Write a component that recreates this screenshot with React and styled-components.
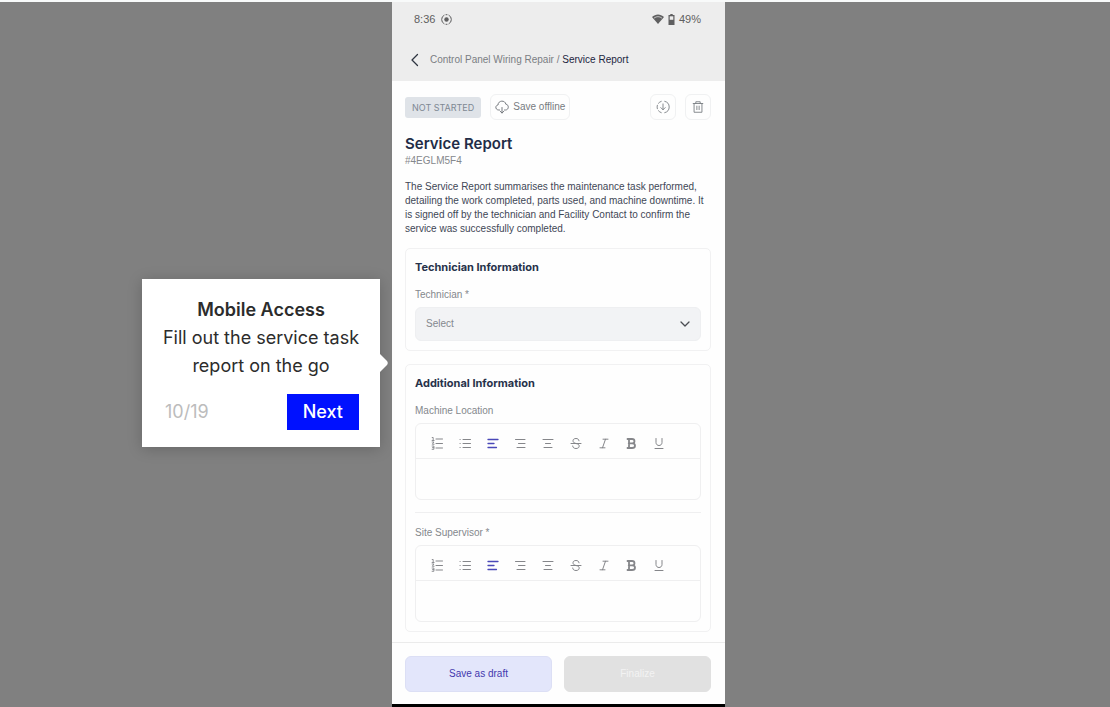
import React from "react";
import styled, { createGlobalStyle } from "styled-components";

const GlobalStyle = createGlobalStyle`
  *, *::before, *::after { box-sizing: border-box; }
  body { margin: 0; background: #808080; font-family: Inter, "Liberation Sans", sans-serif; }
  h1, h2, p { margin: 0; }
  button, select, textarea { font: inherit; margin: 0; }
`;

const Stage = styled.main`
  display: flex;
  justify-content: center;
  min-height: 100vh;
  padding-left: 7px;
  border-top: 2px solid #f8fafa;
`;

const Phone = styled.div`
  display: flex;
  flex-direction: column;
  flex: 0 1 333px;
  min-width: 0;
  background: #fefefe;
  border-bottom: 3px solid #000;
  color: #3f4756;
  font-family: "Liberation Sans", Arial, sans-serif;
  font-size: 10px;
  line-height: 14px;
`;

const TopArea = styled.header`
  background: #ededed;
  padding: 9px 22px 14px 18px;
`;

const StatusBar = styled.div`
  display: flex;
  justify-content: space-between;
  align-items: center;
  padding: 0 2px 0 4px;
  color: #5f5f60;
  font-size: 11px;
  line-height: 16px;
`;

const StatusGroup = styled.div`
  display: flex;
  align-items: center;
  gap: ${(p) => p.$gap}px;
`;

const Crumbs = styled.nav`
  display: flex;
  align-items: center;
  gap: 10px;
  margin-top: 26px;
  line-height: 14px;
  color: #7b7e83;
  white-space: nowrap;
`;

const BackButton = styled.button`
  display: flex;
  padding: 0;
  border: 0;
  background: none;
  color: #2e3440;
`;

const CrumbLink = styled.a`
  color: inherit;
  text-decoration: none;
`;

const CurrentCrumb = styled.span`
  color: #1c2540;
`;

const Content = styled.div`
  display: flex;
  flex-direction: column;
  flex: 1;
  padding: 13px 14px 9px 13px;
`;

const ActionRow = styled.div`
  display: flex;
  align-items: center;
  gap: 9px;
`;

const StatusTag = styled.span`
  padding: 4px 7px;
  border-radius: 3px;
  background: #dfe3e8;
  color: #7e8893;
  font-family: Inter, sans-serif;
  font-size: 9px;
  line-height: 13px;
  white-space: nowrap;
`;

const OutlineButton = styled.button`
  display: flex;
  align-items: center;
  justify-content: center;
  gap: 4px;
  height: 26px;
  min-width: 26px;
  padding: 0 4px;
  border: 1px solid #f0f1f2;
  border-radius: 6px;
  background: #fefefe;
  color: #777b80;
  white-space: nowrap;
`;

const Spacer = styled.span`
  flex: 1;
`;

const Title = styled.h1`
  margin-top: 14px;
  color: #222c47;
  font-family: Inter, sans-serif;
  font-size: 15px;
  font-weight: 600;
  line-height: 20px;
`;

const ReportId = styled.p`
  color: #85888c;
  line-height: 14px;
`;

const Description = styled.p`
  margin: 12px 0;
  line-height: 14px;
  white-space: nowrap;
`;

const Card = styled.section`
  padding: 9px;
  border: 1px solid #f1f1f2;
  border-radius: 5px;

  & + & { margin-top: 13px; }
`;

const CardTitle = styled.h2`
  margin-bottom: 12px;
  color: #27324a;
  font-family: Inter, sans-serif;
  font-size: 11px;
  font-weight: 700;
  line-height: 18px;
`;

const Label = styled.label`
  display: block;
  margin-bottom: 5px;
  color: #84888d;
  line-height: 14px;
`;

const SelectWrap = styled.div`
  display: grid;
  align-items: center;

  & > * { grid-area: 1 / 1; }
  & > svg { justify-self: end; margin-right: 11px; pointer-events: none; color: #4a4d52; }
`;

const Select = styled.select`
  appearance: none;
  width: 100%;
  height: 34px;
  padding: 0 10px;
  border: 1px solid #eeeff1;
  border-radius: 6px;
  background: #f2f3f5;
  color: #84888e;
`;

const Editor = styled.div`
  overflow: hidden;
  border: 1px solid #efeff0;
  border-radius: 6px;
`;

const Toolbar = styled.div`
  display: flex;
  justify-content: space-between;
  padding: 11px 33px 7px 13px;
  border-bottom: 1px solid #efeff0;
`;

const ToolButton = styled.button`
  display: flex;
  padding: 0;
  border: 0;
  background: none;
  color: ${(p) => (p.$active ? "#4a48b8" : "#85868a")};
`;

const EditorInput = styled.textarea`
  display: block;
  width: 100%;
  height: 40px;
  padding: 8px;
  border: 0;
  outline: 0;
  resize: none;
  background: transparent;
`;

const Divider = styled.hr`
  height: 1px;
  margin: 12px 0 13px;
  border: 0;
  background: #efeff0;
`;

const Footer = styled.footer`
  display: flex;
  gap: 12px;
  padding: 13px 14px 12px 13px;
  border-top: 1px solid #ebebeb;
`;

const FooterButton = styled.button`
  flex: 1;
  height: 36px;
  border: 1px solid ${(p) => (p.$primary ? "#dcdff5" : "#e1e1e1")};
  border-radius: 6px;
  background: ${(p) => (p.$primary ? "#e3e6fb" : "#e1e1e1")};
  color: ${(p) => (p.$primary ? "#4338ae" : "#f3f3f3")};
`;

const Tour = styled.aside`
  position: absolute;
  top: 279px;
  right: calc(50% + 175px);
  width: 238px;
  padding: 17px 16px;
  background: #fff;
  box-shadow: 0 2px 14px rgba(0, 0, 0, 0.2);
  color: #2c2c2c;
  font-size: 18px;
  line-height: 28px;
  text-align: center;
`;

const TourTitle = styled.h2`
  font-size: 18px;
  font-weight: 600;
  line-height: 28px;
`;

const TourFooter = styled.div`
  display: flex;
  justify-content: space-between;
  align-items: center;
  margin-top: 14px;
  padding: 0 5px;
`;

const TourCount = styled.span`
  padding-left: 2px;
  color: #bcbcbc;
`;

const NextButton = styled.button`
  height: 36px;
  padding: 0 16px;
  border: 0;
  background: #0011ff;
  color: #fff;
  font-weight: 500;
`;

const TourArrow = styled.svg`
  position: absolute;
  left: 100%;
  top: 50%;
  margin-top: -9px;
`;

const Stroke = ({ size = 16, width = 1, children }) => (
  <svg width={size} height={size} viewBox="0 0 16 16" fill="none" stroke="currentColor"
    strokeWidth={width} strokeLinecap="round" strokeLinejoin="round" aria-hidden="true">
    {children}
  </svg>
);

const tools = [
  { name: "Numbered list", art: <><path d="M7 4H13.500M7 8.500H13.500M7 13H13.500" /><path d="M3.200 2.500h1v3M3.100 5.500h2M3.100 7h1.800l-1.600 2.300h1.800M3.100 11h1.800v3.300H3.100M3.500 12.600h1.300" strokeWidth=".9" /></> },
  { name: "Bulleted list", art: <path d="M6 4.500h7.500M6 8.500h7.500M6 12.500h7.500M3 4.500h.2M3 8.500h.2M3 12.500h.2" /> },
  { name: "Align left", active: true, art: <path d="M3 4.500h10M3 8.500h6M3 12.500h8.500" strokeWidth="1.3" /> },
  { name: "Align right", art: <path d="M3.500 4.500h9.500M6.500 8.500H13M5 12.500h8" /> },
  { name: "Align center", art: <path d="M3 4.500h10M5.500 8.500h5M4 12.500h8" /> },
  { name: "Strikethrough", art: <><path d="M3 8.500h10" /><path d="M11 5.800C10.800 4.200 9.700 3.500 8 3.500c-1.800 0-3 .8-3 2.300 0 1.600 1.200 2.200 3 2.700 2.200.5 3.200 1.100 3.200 2.600s-1.300 2.400-3.200 2.400-3.200-.8-3.300-2.500" /></> },
  { name: "Italic", art: <path d="M7 4.200h5M4 12.800h5M9.500 4.200l-3 8.600" /> },
  { name: "Bold", art: <path d="M4.500 4H9c3.300 0 3.300 4.300 0 4.300H5.700M9 8.300c4 0 4 4.700 0 4.700H4.500M6 4v9" strokeWidth="1.800" /> },
  { name: "Underline", art: <path d="M5 3.500v4c0 4 6 4 6 0v-4M4 13.500h8" /> },
];

function RichField({ id, label }) {
  return (
    <div>
      <Label htmlFor={id}>{label}</Label>
      <Editor>
        <Toolbar role="toolbar" aria-label={label + " formatting"}>
          {tools.map((t) => (
            <ToolButton key={t.name} type="button" aria-label={t.name} $active={t.active}>
              <Stroke>{t.art}</Stroke>
            </ToolButton>
          ))}
        </Toolbar>
        <EditorInput id={id} />
      </Editor>
    </div>
  );
}

export default function App() {
  return (
    <>
      <GlobalStyle />
      <Stage>
        <Phone>
          <TopArea>
            <StatusBar>
              <StatusGroup $gap={6}>
                <span>8:36</span>
                <svg width="11" height="11" viewBox="0 0 11 11" fill="none" stroke="currentColor" aria-hidden="true">
                  <circle cx="5.5" cy="5.5" r="2.2" fill="currentColor" stroke="none" />
                  <path d="M3.400 1.100a4.900 4.900 0 0 0 0 8.800M7.600 1.100a4.900 4.900 0 0 1 0 8.800M4.600.7h1.800M4.600 10.300h1.800" />
                </svg>
              </StatusGroup>
              <StatusGroup $gap={4}>
                <svg width="12" height="10" viewBox="0 0 12 10" aria-hidden="true">
                  <path d="M0 3C3.500-.4 8.500-.4 12 3L6 10Z" fill="currentColor" />
                  <path d="M2 4.200C4.500 2.200 7.500 2.200 10 4.200" stroke="#ededed" strokeWidth=".7" fill="none" />
                </svg>
                <svg width="7" height="11" viewBox="0 0 7 11" aria-hidden="true">
                  <path d="M2.300 0h2.400v1H6.500v10h-6V1h1.800Z" fill="currentColor" />
                  <path d="M1.700 2.300h3.600v3.500H1.700Z" fill="#ededed" />
                </svg>
                <span>49%</span>
              </StatusGroup>
            </StatusBar>
            <Crumbs aria-label="Breadcrumb">
              <BackButton type="button" aria-label="Back">
                <svg width="10" height="14" viewBox="0 0 10 14" fill="none" stroke="currentColor" strokeWidth="1.3" strokeLinecap="round" strokeLinejoin="round" aria-hidden="true">
                  <path d="M7.500 1.500 2 7l5.500 5.500" />
                </svg>
              </BackButton>
              <span>
                <CrumbLink href="#task">Control Panel Wiring Repair</CrumbLink> / <CurrentCrumb>Service Report</CurrentCrumb>
              </span>
            </Crumbs>
          </TopArea>

          <Content>
            <ActionRow>
              <StatusTag>NOT STARTED</StatusTag>
              <OutlineButton type="button">
                <svg width="14" height="14" viewBox="0 0 14 14" fill="none" stroke="currentColor" strokeLinecap="round" strokeLinejoin="round" aria-hidden="true">
                  <path d="M4.500 10H3.800C.2 10-.2 5.500 3 5c.2-5 7.300-5 7.800-.8C14.300 4.500 14 10 10.500 10H9.500M7 7.500V13M5.200 11.300 7 13l1.800-1.700" />
                </svg>
                Save offline
              </OutlineButton>
              <Spacer />
              <OutlineButton type="button" aria-label="Download">
                <Stroke size={14}>
                  <path d="M10 1.500a6.700 6.700 0 0 1 0 13M6 14.500a6.700 6.700 0 0 1-3.200-2.200M1.500 10a6.700 6.700 0 0 1 0-4M2.800 3.700A6.700 6.700 0 0 1 6 1.500M8 4.500v6.500M5.500 8.700 8 11.200l2.500-2.500" />
                </Stroke>
              </OutlineButton>
              <OutlineButton type="button" aria-label="Delete">
                <Stroke size={14}>
                  <path d="M2.500 4h11M5.500 4V2h5v2M3.500 4v10h9V4M6.700 7v4M9.300 7v4" />
                </Stroke>
              </OutlineButton>
            </ActionRow>

            <Title>Service Report</Title>
            <ReportId>#4EGLM5F4</ReportId>
            <Description>
              The Service Report summarises the maintenance task performed,<br />
              detailing the work completed, parts used, and machine downtime. It<br />
              is signed off by the technician and Facility Contact to confirm the<br />
              service was successfully completed.
            </Description>

            <Card>
              <CardTitle>Technician Information</CardTitle>
              <Label htmlFor="technician">Technician *</Label>
              <SelectWrap>
                <Select id="technician" defaultValue="">
                  <option value="">Select</option>
                </Select>
                <svg width="10" height="6" viewBox="0 0 10 6" fill="none" stroke="currentColor" strokeWidth="1.3" strokeLinecap="round" strokeLinejoin="round" aria-hidden="true">
                  <path d="m1 1 4 4 4-4" />
                </svg>
              </SelectWrap>
            </Card>

            <Card>
              <CardTitle>Additional Information</CardTitle>
              <RichField id="machine-location" label="Machine Location" />
              <Divider />
              <RichField id="site-supervisor" label="Site Supervisor *" />
            </Card>
          </Content>

          <Footer>
            <FooterButton type="button" $primary>Save as draft</FooterButton>
            <FooterButton type="button" disabled>Finalize</FooterButton>
          </Footer>
        </Phone>
      </Stage>

      <Tour aria-label="Product tour">
        <TourTitle>Mobile Access</TourTitle>
        <p>Fill out the service task report on the go</p>
        <TourFooter>
          <TourCount>10/19</TourCount>
          <NextButton type="button">Next</NextButton>
        </TourFooter>
        <TourArrow width="8" height="18" viewBox="0 0 8 18" aria-hidden="true">
          <path d="M0 0 7 7q1.500 2 0 4L0 18Z" fill="#fff" />
        </TourArrow>
      </Tour>
    </>
  );
}
